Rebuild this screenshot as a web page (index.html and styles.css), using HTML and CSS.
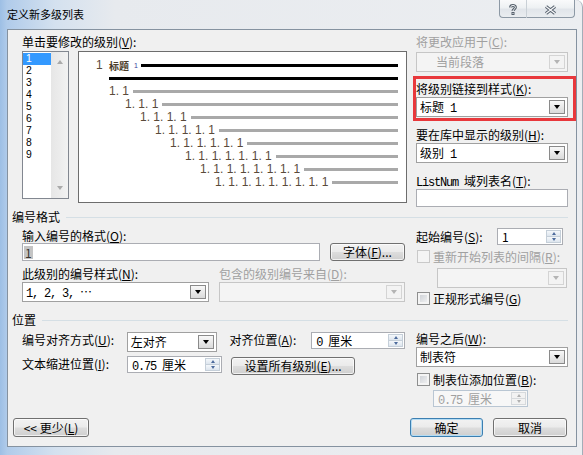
FILE: index.html
```html
<!DOCTYPE html>
<html lang="zh-CN">
<head>
    <meta charset="UTF-8">
    <title>定义新多级列表</title>
    <link rel="stylesheet" href="styles.css">
</head>
<body>
    <div class="window">
        <div class="titlebar">
            <span class="title">定义新多级列表</span>
            <div class="caption">
                <span class="cap-btn help">
                    <svg width="8" height="11" viewBox="0 0 8 11">
                        <path d="M1.6 3.4 C1.6 0.9 6.4 0.9 6.4 3.3 C6.4 5.1 4 5.2 4 7" fill="none" stroke="#56616d" stroke-width="3"/>
                        <path d="M1.6 3.4 C1.6 0.9 6.4 0.9 6.4 3.3 C6.4 5.1 4 5.2 4 7" fill="none" stroke="#fafbfc" stroke-width="1"/>
                        <rect x="2.5" y="8" width="3" height="3" fill="#56616d"/>
                        <rect x="3.5" y="9" width="1" height="1" fill="#fafbfc"/>
                    </svg>
                </span>
                <span class="cap-btn close">
                    <svg width="13" height="10" viewBox="0 0 13 10">
                        <path d="M2 1.5 L11 8.5 M11 1.5 L2 8.5" stroke="#56616d" stroke-width="3.4"/>
                        <path d="M2 1.5 L11 8.5 M11 1.5 L2 8.5" stroke="#f6f7f9" stroke-width="1.3"/>
                    </svg>
                </span>
            </div>
        </div>

        <div class="client">
            <!-- levels + preview + style link -->
            <div class="top">
                <div class="levels">
                    <div class="label">单击要修改的级别(<u>V</u>):</div>
                    <div class="levels-row">
                        <div class="listbox">
                            <div class="items">
                                <div class="item selected">1</div>
                                <div class="item">2</div>
                                <div class="item">3</div>
                                <div class="item">4</div>
                                <div class="item">5</div>
                                <div class="item">6</div>
                                <div class="item">7</div>
                                <div class="item">8</div>
                                <div class="item">9</div>
                            </div>
                            <div class="scrollbar">
                                <span class="arrow up"></span>
                                <span class="arrow down"></span>
                            </div>
                        </div>
                        <div class="preview">
                            <div class="pv-row first">
                                <span class="pv-num lead">1</span>
                                <span class="pv-head">标题</span>
                                <span class="pv-tiny">1</span>
                                <span class="bar dark"></span>
                            </div>
                            <div class="pv-row l2"><span class="bar dark flush"></span></div>
                            <div class="pv-row l2"><span class="pv-num">1. 1</span><span class="bar"></span></div>
                            <div class="pv-row l3"><span class="pv-num">1. 1. 1</span><span class="bar"></span></div>
                            <div class="pv-row l4"><span class="pv-num">1. 1. 1. 1</span><span class="bar"></span></div>
                            <div class="pv-row l5"><span class="pv-num">1. 1. 1. 1. 1</span><span class="bar"></span></div>
                            <div class="pv-row l6"><span class="pv-num">1. 1. 1. 1. 1. 1</span><span class="bar"></span></div>
                            <div class="pv-row l7"><span class="pv-num">1. 1. 1. 1. 1. 1. 1</span><span class="bar"></span></div>
                            <div class="pv-row l8"><span class="pv-num">1. 1. 1. 1. 1. 1. 1. 1</span><span class="bar"></span></div>
                            <div class="pv-row l9"><span class="pv-num">1. 1. 1. 1. 1. 1. 1. 1. 1</span><span class="bar"></span></div>
                        </div>
                    </div>
                </div>

                <div class="side">
                    <div class="label off">将更改应用于(<u>C</u>):</div>
                    <div class="combo off first"><span class="val">当前段落</span><span class="drop"></span></div>
                    <div class="linked">
                        <div class="label">将级别链接到样式(<u>K</u>):</div>
                        <div class="combo"><span class="val">标题<span class="m"> 1</span></span><span class="drop"></span></div>
                    </div>
                    <div class="label spaced">要在库中显示的级别(<u>H</u>):</div>
                    <div class="combo"><span class="val">级别<span class="m"> 1</span></span><span class="drop"></span></div>
                    <div class="label spaced"><span class="m">ListNum </span>域列表名(<u>T</u>):</div>
                    <div class="textbox"></div>
                </div>
            </div>

            <!-- 编号格式 -->
            <div class="group numbering">编号格式</div>
            <div class="format">
                <div class="fmt-left">
                    <div class="label">输入编号的格式(<u>O</u>):</div>
                    <div class="fmt-line">
                        <div class="textbox wide"><span class="field">1</span></div>
                        <button class="btn font-btn">字体(<u>F</u>)...</button>
                    </div>
                    <div class="fmt-sub">
                        <div class="sub-col">
                            <div class="label">此级别的编号样式(<u>N</u>):</div>
                            <div class="combo"><span class="val"><span class="m">1, 2, 3, </span>…</span><span class="drop"></span></div>
                        </div>
                        <div class="sub-col second">
                            <div class="label off">包含的级别编号来自(<u>D</u>):</div>
                            <div class="combo off"><span class="val"></span><span class="drop"></span></div>
                        </div>
                    </div>
                </div>
                <div class="fmt-right">
                    <div class="start-row">
                        <span class="label start-label">起始编号(<u>S</u>):</span>
                        <div class="spin start-spin">
                            <span class="val">1</span>
                            <span class="spin-btns"><span class="up"></span><span class="down"></span></span>
                        </div>
                    </div>
                    <div class="check-row">
                        <span class="check off"></span>
                        <span class="label off">重新开始列表的间隔(<u>R</u>):</span>
                    </div>
                    <div class="combo off restart"><span class="val"></span><span class="drop"></span></div>
                    <div class="check-row formal">
                        <span class="check"></span>
                        <span class="label">正规形式编号(<u>G</u>)</span>
                    </div>
                </div>
            </div>

            <!-- 位置 -->
            <div class="group position">位置</div>
            <div class="pos">
                <div class="pos-left">
                    <div class="pos-line">
                        <span class="label pos-label">编号对齐方式(<u>U</u>):</span>
                        <div class="combo align-combo"><span class="val">左对齐</span><span class="drop"></span></div>
                        <span class="label at-label">对齐位置(<u>A</u>):</span>
                        <div class="spin at-spin">
                            <span class="val"><span class="m">0 </span>厘米</span>
                            <span class="spin-btns"><span class="up"></span><span class="down"></span></span>
                        </div>
                    </div>
                    <div class="pos-line second">
                        <span class="label pos-label">文本缩进位置(<u>I</u>):</span>
                        <div class="spin indent-spin">
                            <span class="val"><span class="m">0.75 </span>厘米</span>
                            <span class="spin-btns"><span class="up"></span><span class="down"></span></span>
                        </div>
                        <button class="btn all-btn">设置所有级别(<u>E</u>)...</button>
                    </div>
                </div>
                <div class="pos-right">
                    <div class="label">编号之后(<u>W</u>):</div>
                    <div class="combo"><span class="val">制表符</span><span class="drop"></span></div>
                    <div class="check-row tab">
                        <span class="check"></span>
                        <span class="label">制表位添加位置(<u>B</u>):</span>
                    </div>
                    <div class="spin off tab-spin">
                        <span class="val"><span class="m">0.75 </span>厘米</span>
                        <span class="spin-btns"><span class="up"></span><span class="down"></span></span>
                    </div>
                </div>
            </div>

            <div class="actions">
                <button class="btn less-btn">&lt;&lt; 更少(<u>L</u>)</button>
                <div class="confirm">
                    <button class="btn default ok-btn">确定</button>
                    <button class="btn cancel-btn">取消</button>
                </div>
            </div>
        </div>
    </div>
</body>
</html>
```

FILE: styles.css
```css
* {
    box-sizing: border-box;
}
body {
    margin: 0;
    background: #ffffff;
    font-family: "Noto Sans CJK SC", "Liberation Sans", sans-serif;
    font-size: 12px;
    color: #000000;
}
u {
    text-decoration: underline;
}
/* half-width latin in the dialog font is monospaced, 6px a char */
.m {
    font-family: "Liberation Mono", monospace;
    font-size: 12px;
    letter-spacing: -1.2px;
}

/* window frame */
.window {
    width: 583px;
    height: 455px;
    display: flex;
    flex-direction: column;
    background: linear-gradient(to right, #9dbfe5 0px, #b0cbea 7px, #d4e1ef 55px, #e7eaee 115px, #eceef1 100%);
    border-right: 1px solid #a3adb8;
    border-top-right-radius: 7px;
    overflow: hidden;
}
.titlebar {
    height: 29px;
    flex-shrink: 0;
    display: flex;
    justify-content: space-between;
    align-items: flex-start;
    padding-left: 7px;
}
.title {
    margin-top: 7px;
    font-size: 11px;
    line-height: 14px;
}
.caption {
    display: flex;
    margin-right: 7px;
}
.cap-btn {
    height: 18px;
    display: flex;
    justify-content: center;
    padding-top: 5px;
    border: 1px solid #8d99a5;
    border-top: none;
    background: linear-gradient(#f9fafb, #eef1f3 45%, #e1e5ea 55%, #eaedf0);
}
.help {
    width: 28px;
    border-right: 1px solid #c9d0d6;
    border-bottom-left-radius: 4px;
    padding-top: 4px;
}
.close {
    width: 48px;
    border-left: none;
    border-bottom-right-radius: 4px;
}

.client {
    flex: 1;
    margin: 0 5px 8px 7px;
    border: 1px solid #8592a0;
    background: #f0f0f0;
    padding-top: 5px;
    display: flex;
    flex-direction: column;
}

.label {
    height: 14px;
    line-height: 14px;
    white-space: nowrap;
}
.label.off {
    color: #a0a0a0;
}

/* controls */
.combo {
    height: 20px;
    display: flex;
    align-items: stretch;
    padding: 2px 2px 2px 1px;
    border: 1px solid #a0a0a0;
    background: #ffffff;
}
.combo .val {
    flex: 1;
    padding-left: 2px;
    line-height: 14px;
    white-space: nowrap;
}
.drop {
    width: 16px;
    display: flex;
    align-items: center;
    justify-content: center;
    border: 1px solid #8a8a8a;
    background: linear-gradient(#f8f8f8, #dadada);
}
.drop::after {
    content: "";
    border-left: 3.5px solid transparent;
    border-right: 3.5px solid transparent;
    border-top: 4px solid #000000;
}
.combo.off {
    background: #f4f4f4;
    border-color: #c6c6c6;
    color: #a0a0a0;
}
.combo.off .drop {
    border-color: #d4d4d4;
    background: #f3f3f3;
}
.combo.off .drop::after {
    border-top-color: #b4b4b4;
}
.textbox {
    height: 18px;
    display: flex;
    align-items: center;
    padding-left: 1px;
    border: 1px solid #abadb3;
    background: #ffffff;
}
.field {
    background: #c4c4c4;
    color: #3a3530;
    line-height: 13px;
    padding: 0 1px;
}
.spin {
    height: 17px;
    display: flex;
    padding: 1px;
    border: 1px solid #abadb3;
    background: #ffffff;
}
.spin .val {
    flex: 1;
    padding-left: 3px;
    line-height: 13px;
    white-space: nowrap;
}
.spin-btns {
    width: 15px;
    display: flex;
    flex-direction: column;
}
.spin-btns span {
    flex: 1;
    display: flex;
    align-items: center;
    justify-content: center;
    border: 1px solid #c5cfd9;
    background: linear-gradient(#f5f8fb, #dde5ee);
}
.spin-btns span + span {
    border-top: none;
}
.spin-btns .up::after {
    content: "";
    border-left: 2.5px solid transparent;
    border-right: 2.5px solid transparent;
    border-bottom: 3px solid #4d6b9c;
}
.spin-btns .down::after {
    content: "";
    border-left: 2.5px solid transparent;
    border-right: 2.5px solid transparent;
    border-top: 3px solid #4d6b9c;
}
.spin.off {
    border-color: #b9c6d3;
    background: #f7f7f7;
    color: #a0a0a0;
}
.spin.off .spin-btns span {
    border-color: #d6d9dc;
    background: #f2f2f2;
}
.spin.off .spin-btns .up::after {
    border-bottom-color: #b0b0b0;
}
.spin.off .spin-btns .down::after {
    border-top-color: #b0b0b0;
}
.check {
    width: 13px;
    height: 13px;
    flex-shrink: 0;
    border: 1px solid #8e8f8f;
    background: linear-gradient(135deg, #c8ccd2, #f6f6f6);
    box-shadow: inset 0 0 0 2px #f4f4f4;
}
.check.off {
    border-color: #c9c9c9;
    background: #f4f4f4;
}
.btn {
    height: 19px;
    padding: 0;
    display: flex;
    align-items: center;
    justify-content: center;
    font: inherit;
    line-height: 14px;
    color: #000000;
    border: 1px solid #707070;
    border-radius: 3px;
    background: linear-gradient(#f2f2f2 0%, #ebebeb 48%, #dddddd 52%, #cfcfcf 100%);
    box-shadow: inset 0 0 0 1px rgba(255, 255, 255, 0.7);
    white-space: nowrap;
}
.btn.default {
    border-color: #3c7fb1;
    box-shadow: inset 0 0 0 1px #b4dcf4;
}

/* top block */
.top {
    display: flex;
    padding-left: 14px;
}
.levels {
    width: 385px;
}
.levels-row {
    display: flex;
    align-items: flex-start;
    margin-top: 2px;
}
.listbox {
    width: 47px;
    height: 148px;
    display: flex;
    border: 1px solid #828790;
    background: #ffffff;
}
.items {
    width: 28px;
    padding-top: 1px;
}
.item {
    height: 12px;
    line-height: 12px;
    padding-left: 3px;
    font-family: "Liberation Sans", Arial, sans-serif;
    font-size: 10.4px;
}
.item.selected {
    background: #3399ff;
    color: #ffffff;
}
.scrollbar {
    width: 17px;
    display: flex;
    flex-direction: column;
    align-items: center;
    justify-content: space-between;
    padding: 8px 0;
    background: linear-gradient(to right, #e6e6e6, #f2f2f2);
}
.arrow {
    border-left: 3.5px solid transparent;
    border-right: 3.5px solid transparent;
}
.arrow.up {
    border-bottom: 4px solid #aaaaaa;
}
.arrow.down {
    border-top: 4px solid #aaaaaa;
}
.preview {
    width: 330px;
    height: 152px;
    margin-left: 9px;
    padding: 7px 8px 0 0;
    border: 1px solid #6d6d6d;
    background: #ffffff;
}
.pv-row {
    height: 13px;
    display: flex;
    align-items: center;
    white-space: nowrap;
}
.pv-num {
    font-family: "Liberation Sans", Arial, sans-serif;
    font-size: 12px;
    line-height: 13px;
    color: #5a4a3a;
}
.pv-num.lead {
    width: 13px;
}
.pv-head {
    font-size: 10px;
    line-height: 13px;
    font-weight: bold;
    color: #4a3c28;
}
.pv-tiny {
    margin-left: 5px;
    font-family: "Liberation Sans", Arial, sans-serif;
    font-size: 7px;
    color: #3a3a9a;
}
.bar {
    flex: 1;
    height: 3px;
    margin-left: 4px;
    background: #a9a9a9;
}
.bar.dark {
    background: #000000;
    margin-left: 3px;
}
.bar.flush {
    margin-left: 0;
}
.first { padding-left: 17px; }
.l2 { padding-left: 30px; }
.l3 { padding-left: 46px; }
.l4 { padding-left: 61px; }
.l5 { padding-left: 76px; }
.l6 { padding-left: 91px; }
.l7 { padding-left: 106px; }
.l8 { padding-left: 121px; }
.l9 { padding-left: 136px; }

.side {
    width: 152px;
    margin-left: 9px;
    display: flex;
    flex-direction: column;
}
.side .combo,
.side .textbox {
    margin-top: 1px;
}
.side .combo.first {
    margin-top: 3px;
}
.side .label.spaced {
    margin-top: 11px;
}
.linked {
    position: relative;
    margin-top: 10px;
}
.linked::after {
    content: "";
    position: absolute;
    left: -3px;
    top: -6px;
    right: -8px;
    bottom: -4px;
    border: 3px solid #e8383c;
}

/* group headers */
.group {
    height: 14px;
    line-height: 14px;
    display: flex;
    align-items: center;
    padding: 0 8px 0 4px;
}
.group::after {
    content: "";
    flex: 1;
    height: 1px;
    margin-left: 6px;
    background: #d5dfe5;
}
.group.numbering {
    margin-top: 3px;
}
.group.position {
    margin-top: 8px;
}

/* numbering format */
.format {
    display: flex;
    padding-left: 14px;
    margin-top: 5px;
}
.fmt-left {
    width: 383px;
}
.fmt-line {
    display: flex;
}
.textbox.wide {
    width: 298px;
}
.font-btn {
    width: 75px;
    height: 18px;
    margin-left: 10px;
}
.fmt-sub {
    display: flex;
    margin-top: 6px;
}
.sub-col {
    width: 187px;
}
.sub-col.second {
    width: 186px;
    margin-left: 10px;
}
.sub-col .combo {
    margin-top: 1px;
}
.fmt-right {
    width: 152px;
    margin-left: 11px;
    margin-top: -1px;
}
.start-row {
    height: 17px;
    display: flex;
    align-items: center;
}
.start-label {
    width: 81px;
}
.start-spin {
    width: 66px;
}
.check-row {
    height: 13px;
    display: flex;
    align-items: center;
    gap: 3px;
    margin-top: 5px;
    padding-left: 1px;
}
.combo.restart {
    width: 130px;
    margin: 5px 0 0 21px;
}
.check-row.formal {
    margin-top: 4px;
}

/* position */
.pos {
    display: flex;
    padding-left: 14px;
    margin-top: 5px;
}
.pos-left {
    width: 383px;
}
.pos-line {
    display: flex;
    align-items: flex-start;
}
.pos-line.second {
    margin-top: 4px;
}
.pos-line .label {
    height: 16px;
    line-height: 16px;
}
.pos-label {
    width: 105px;
}
.align-combo {
    width: 91px;
}
.at-label {
    width: 82px;
    margin-left: 12px;
}
.at-spin {
    width: 94px;
}
.indent-spin {
    width: 95px;
}
.all-btn {
    width: 124px;
    height: 18px;
    margin: 1px 0 0 9px;
}
.pos-right {
    width: 152px;
    margin-left: 11px;
}
.pos-right .combo {
    margin-top: 1px;
}
.check-row.tab {
    margin-top: 6px;
}
.tab-spin {
    width: 95px;
    margin: 4px 0 0 17px;
}

/* bottom buttons */
.actions {
    display: flex;
    justify-content: space-between;
    margin-top: 11px;
    padding: 0 9px 0 5px;
}
.less-btn {
    width: 76px;
}
.confirm {
    display: flex;
    gap: 10px;
}
.ok-btn {
    width: 73px;
}
.cancel-btn {
    width: 74px;
}
```
